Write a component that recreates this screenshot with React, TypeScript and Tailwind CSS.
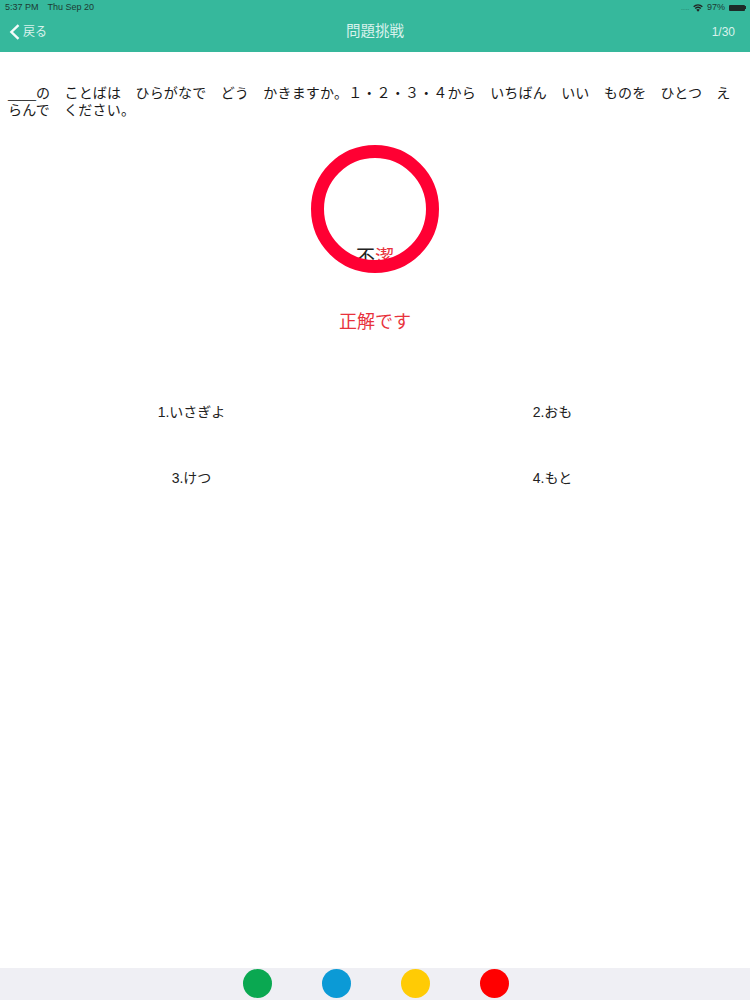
const font = { fontFamily: '"Liberation Sans", "Noto Sans CJK JP", sans-serif' };

function Wifi() {
  return (
    <svg width="10" height="8" viewBox="0 0 12 9" fill="#222">
      <path d="M6 9 3.9 6.5a3.2 3.2 0 0 1 4.2 0Z" />
      <path d="M3.2 5.7 2.1 4.4a6 6 0 0 1 7.8 0L8.8 5.7a4.3 4.3 0 0 0-5.6 0Z" />
      <path d="M1.4 3.6.2 2.3a8.8 8.8 0 0 1 11.6 0l-1.2 1.3a7 7 0 0 0-9.2 0Z" />
    </svg>
  );
}

function StatusBar() {
  return (
    <div className="flex h-[14px] items-center justify-between pl-[5px] pr-[4px] pt-[1px] text-[9px] text-[#1d3a33]">
      <div className="flex gap-[9px]">
        <span>5:37 PM</span>
        <span>Thu Sep 20</span>
      </div>
      <div className="flex items-center gap-[4px]">
        <span className="text-[#2a8f79] tracking-tighter leading-none">....</span>
        <Wifi />
        <span>97%</span>
        <div className="flex items-center">
          <div className="h-[6px] w-[16px] rounded-[1px] bg-[#1d2b28]" />
          <div className="h-[3px] w-[1px] bg-[#1d2b28]" />
        </div>
      </div>
    </div>
  );
}

function NavBar() {
  return (
    <div className="relative flex h-[37px] items-center justify-between pb-[1px] pl-[9px] pr-[15px] text-[#d9f2ec]">
      <div className="flex items-center gap-[3px] text-[12px]">
        <svg width="11" height="16" viewBox="0 0 11 16" fill="none" stroke="#f4fbf9" strokeWidth="2.4">
          <path d="M9.5 1.2 2.4 8l7.1 6.8" />
        </svg>
        <span>戻る</span>
      </div>
      <div className="absolute inset-x-0 text-center text-[14.5px]">問題挑戦</div>
      <span className="text-[12px]">1/30</span>
    </div>
  );
}

const answers = ['1.いさぎよ', '2.おも', '3.けつ', '4.もと'];
const dots = ['bg-[#0aa851]', 'bg-[#0b9ad6]', 'bg-[#ffcb05]', 'bg-[#ff0000]'];

export default function App() {
  return (
    <div className="flex h-[1000px] w-[750px] flex-col overflow-hidden bg-white" style={font}>
      <header className="h-[52px] bg-[#36b89c]">
        <StatusBar />
        <NavBar />
      </header>

      <main className="flex-1">
        <p className="px-[8px] pt-[33px] text-[14px] leading-[17px] tracking-[0.2px] text-[#1a1a1a] [word-break:break-all]">
          <span className="text-[12.6px] leading-none tracking-normal">____</span>の　ことばは　ひらがなで　どう　かきますか。１・２・３・４から　いちばん　いい　ものを　ひとつ　えらんで　ください。
        </p>

        <div className="relative mx-auto mt-[26px] flex h-[128px] w-[128px] items-end justify-center">
          <div className="mb-[3px] text-[19px] leading-[24px] text-[#222]">
            不<span className="text-[#e8323c]">潔</span>
          </div>
          <div className="absolute inset-0 rounded-full border-[13px] border-[#ff0033]" />
        </div>

        <div className="mt-[36px] text-center text-[18px] leading-[26px] text-[#e8323c]">正解です</div>

        <div className="mt-[65px] grid grid-cols-2 gap-y-[42px] pl-[11px] pr-[17px] text-[14px] leading-[24px] text-[#222]">
          {answers.map((a) => (
            <div key={a} className="text-center">
              {a}
            </div>
          ))}
        </div>
      </main>

      <footer className="flex h-[32px] items-start justify-center gap-[50px] bg-[#efeff4] pl-[1px] pt-[1px]">
        {dots.map((c) => (
          <div key={c} className={`h-[29px] w-[29px] rounded-full ${c}`} />
        ))}
      </footer>
    </div>
  );
}
